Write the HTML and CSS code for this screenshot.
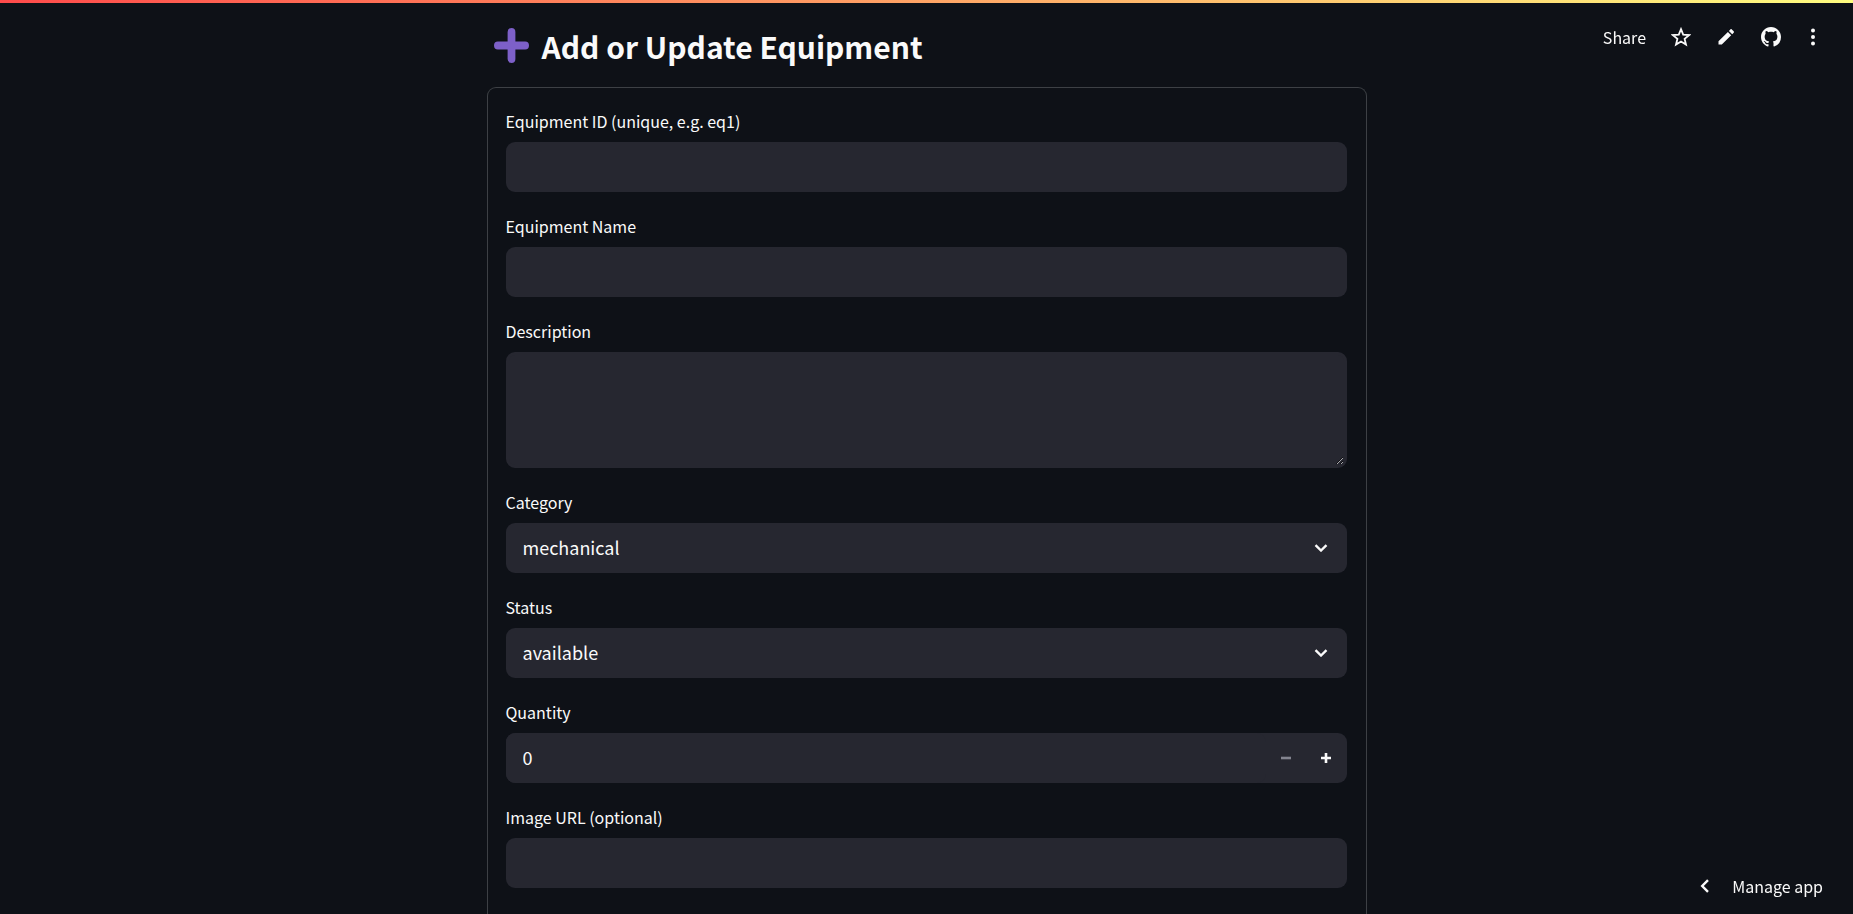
FILE: index.html
```html
<!DOCTYPE html>
<html lang="en">
<head>
<meta charset="utf-8">
<meta name="viewport" content="width=device-width, initial-scale=1">
<title>Add or Update Equipment</title>
<link rel="stylesheet" href="styles.css">
</head>
<body>
<div class="decoration"></div>
<header class="toolbar">
  <button class="share" type="button">Share</button>
  <button class="tool" type="button" aria-label="Favorite">
    <svg viewBox="0 0 20 20" fill="none" stroke="currentColor" stroke-width="1.8"><path d="M10 2.2l2.2 5.4 5.9.5-4.5 3.8 1.4 5.7-5-3-5 3 1.4-5.7L1.900 8.100l5.900-.5z"/></svg>
  </button>
  <button class="tool" type="button" aria-label="Edit">
    <svg viewBox="0 0 20 20" fill="currentColor"><path d="M2.500 17.500v-3.300l9.400-9.300 3.300 3.300-9.400 9.300zM12.900 3.900l1.500-1.500c.4-.4 1-.4 1.400 0l1.900 1.900c.4.4.4 1 0 1.400l-1.500 1.500z"/></svg>
  </button>
  <button class="tool" type="button" aria-label="View source on GitHub">
    <svg viewBox="0 0 16 16" fill="currentColor"><path d="M8 0C3.580 0 0 3.580 0 8c0 3.540 2.290 6.530 5.470 7.590.4.070.55-.17.55-.38 0-.19-.01-.82-.01-1.490-2.010.37-2.530-.49-2.690-.94-.09-.23-.48-.94-.82-1.130-.28-.15-.68-.52-.01-.53.63-.01 1.080.58 1.230.82.72 1.210 1.870.87 2.330.66.07-.52.28-.87.51-1.070-1.780-.2-3.640-.89-3.640-3.950 0-.87.31-1.590.82-2.150-.08-.2-.36-1.020.08-2.120 0 0 .67-.21 2.200.82.64-.18 1.320-.27 2-.27s1.360.09 2 .27c1.530-1.040 2.200-.82 2.200-.82.44 1.100.16 1.920.08 2.120.51.56.82 1.270.82 2.150 0 3.070-1.870 3.750-3.650 3.950.29.25.54.73.54 1.480 0 1.070-.01 1.930-.01 2.200 0 .21.15.46.55.38A8 8 0 0 0 16 8c0-4.420-3.580-8-8-8z"/></svg>
  </button>
  <button class="tool tool-menu" type="button" aria-label="Menu">
    <svg viewBox="0 0 20 20" fill="currentColor"><circle cx="10" cy="3.500" r="2"/><circle cx="10" cy="10" r="2"/><circle cx="10" cy="16.500" r="2"/></svg>
  </button>
</header>

<main class="page">
  <h1 class="title">
    <svg class="plus" viewBox="0 0 36 36" aria-hidden="true"><path fill="#7d60c8" d="M18 0a4 4 0 0 1 4 4v10h10a4 4 0 0 1 0 8H22v10a4 4 0 0 1-8 0V22H4a4 4 0 0 1 0-8h10V4a4 4 0 0 1 4-4z"/></svg>
    Add or Update Equipment
  </h1>
  <form class="card">
    <div class="field">
      <label class="label" for="eq-id">Equipment ID (unique, e.g. eq1)</label>
      <input class="control" id="eq-id" type="text">
    </div>
    <div class="field">
      <label class="label" for="eq-name">Equipment Name</label>
      <input class="control" id="eq-name" type="text">
    </div>
    <div class="field">
      <label class="label" for="eq-description">Description</label>
      <textarea class="control control-area" id="eq-description"></textarea>
    </div>
    <div class="field">
      <label class="label" for="eq-category">Category</label>
      <div class="select-wrap">
        <select class="control" id="eq-category"><option>mechanical</option></select>
        <svg class="chevron" viewBox="0 0 14 8" aria-hidden="true"><path d="M1.500 1.200L7 6.500l5.500-5.300"/></svg>
      </div>
    </div>
    <div class="field">
      <label class="label" for="eq-status">Status</label>
      <div class="select-wrap">
        <select class="control" id="eq-status"><option>available</option></select>
        <svg class="chevron" viewBox="0 0 14 8" aria-hidden="true"><path d="M1.500 1.200L7 6.500l5.500-5.300"/></svg>
      </div>
    </div>
    <div class="field">
      <label class="label" for="eq-quantity">Quantity</label>
      <div class="number">
        <input class="control" id="eq-quantity" type="number" value="0" min="0">
        <button class="step" type="button" aria-label="Decrease quantity" disabled><svg viewBox="0 0 10 10"><path d="M0 5h10"/></svg></button>
        <button class="step" type="button" aria-label="Increase quantity"><svg viewBox="0 0 10 10"><path d="M0 5h10M5 0v10"/></svg></button>
      </div>
    </div>
    <div class="field">
      <label class="label" for="eq-image">Image URL (optional)</label>
      <input class="control" id="eq-image" type="url">
    </div>
  </form>
</main>

<button class="manage" type="button">
  <svg viewBox="0 0 10 14" aria-hidden="true"><path d="M8 1.200L2.200 7 8 12.800"/></svg>
  Manage app
</button>
</body>
</html>
```
FILE: styles.css
```css
* {
  box-sizing: border-box;
}

html {
  color-scheme: dark;
}

body {
  margin: 0;
  background: #0e1117;
  color: #fafafa;
  font-family: "Noto Sans CJK SC", sans-serif;
  font-size: 16px;
}

button,
input,
select,
textarea {
  font: inherit;
  color: inherit;
}

button {
  display: flex;
  align-items: center;
  justify-content: center;
  padding: 0;
  border: 0;
  background: none;
}

.decoration {
  position: fixed;
  top: 0;
  left: 0;
  right: 0;
  height: 3px;
  background: linear-gradient(90deg, #ff4b4b, #fffd80);
}

.toolbar {
  position: fixed;
  top: 20px;
  right: 30px;
  display: flex;
  align-items: center;
  gap: 25px;
  height: 34px;
}

.tool svg {
  display: block;
  width: 20px;
  height: 20px;
}

.tool-menu {
  margin-left: -3px;
}

.page {
  display: flex;
  flex-direction: column;
  width: 100%;
  max-width: 880px;
  height: 100vh;
  margin: 0 auto;
  overflow: hidden;
}

.title {
  display: flex;
  flex: none;
  align-items: center;
  gap: 13px;
  height: 87px;
  margin: 0;
  padding: 4px 7px 0;
  font-size: 30px;
  font-weight: 600;
  line-height: 40px;
}

.plus {
  width: 35px;
  height: 35px;
}

.card {
  display: flex;
  flex: 1;
  flex-direction: column;
  gap: 19px;
  padding: 18px 19px 0 18px;
  border: 1px solid #3d4045;
  border-bottom: 0;
  border-radius: 9px 9px 0 0;
}

.field {
  display: flex;
  flex-direction: column;
  gap: 6px;
}

.label {
  line-height: 30px;
}

.control {
  display: block;
  width: 100%;
  height: 50px;
  padding: 0 17px 2px;
  border: 0;
  border-radius: 9px;
  outline: 0;
  background: #262730;
  font-size: 18px;
  appearance: none;
}

.control-area {
  height: 116px;
  padding: 14px;
  border: 3px solid #262730;
  resize: vertical;
}

.select-wrap {
  display: grid;
  align-items: center;
}

.select-wrap > * {
  grid-area: 1 / 1;
}

.chevron {
  justify-self: end;
  width: 14px;
  height: 8px;
  margin-right: 19px;
  fill: none;
  stroke: currentColor;
  stroke-width: 2.400;
  pointer-events: none;
}

.number {
  display: flex;
  border-radius: 9px;
  background: #262730;
}

.number .control {
  flex: 1;
  width: auto;
  appearance: textfield;
}

.step {
  width: 40px;
}

.step svg {
  width: 10px;
  height: 10px;
  stroke: currentColor;
  stroke-width: 2.600;
}

.step:disabled {
  color: #83848f;
}

.step:last-child {
  margin-right: 1px;
}

.manage {
  position: fixed;
  right: 30px;
  bottom: 12px;
  gap: 22px;
  height: 32px;
}

.manage svg {
  width: 10px;
  height: 14px;
  fill: none;
  stroke: currentColor;
  stroke-width: 2.400;
}
```
